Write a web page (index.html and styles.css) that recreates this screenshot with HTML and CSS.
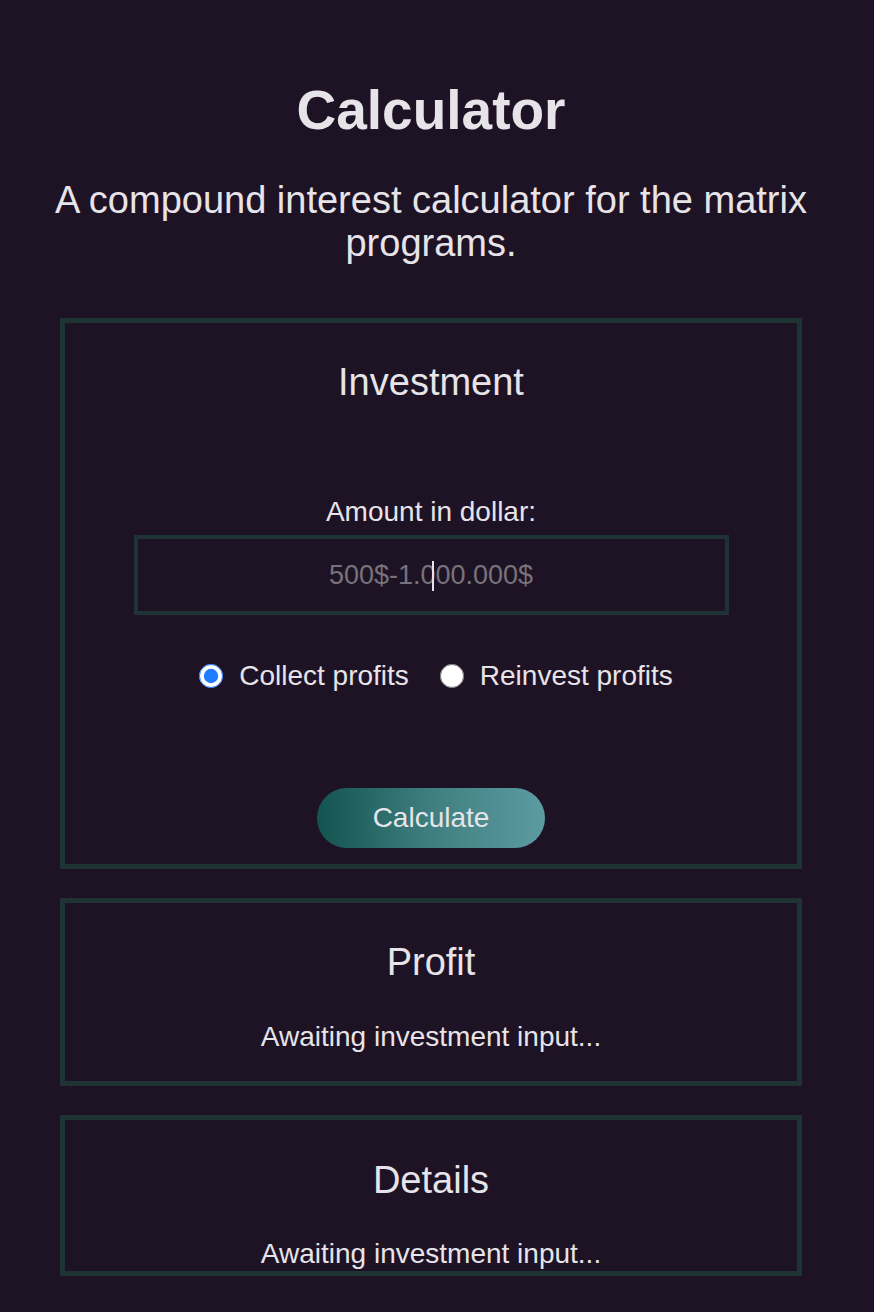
FILE: index.html
```html
<!DOCTYPE html>
<html lang="en">
<head>
<meta charset="utf-8">
<title>Calculator</title>
<link rel="stylesheet" href="styles.css">
</head>
<body>
<main class="page">
  <h1 class="title">Calculator</h1>
  <p class="subtitle">A compound interest calculator for the matrix programs.</p>

  <section class="card card-investment">
    <h2 class="card-title">Investment</h2>
    <label class="field-label" for="amount">Amount in dollar:</label>
    <div class="input-wrap">
      <input class="amount-input" id="amount" type="text" placeholder="500$-1.000.000$">
    </div>
    <div class="radio-row">
      <label class="radio-option"><input type="radio" name="mode" checked> <span>Collect profits</span></label>
      <label class="radio-option"><input type="radio" name="mode"> <span>Reinvest profits</span></label>
    </div>
    <button class="calc-btn" type="button">Calculate</button>
  </section>

  <section class="card card-profit">
    <h2 class="card-title">Profit</h2>
    <p class="card-text">Awaiting investment input...</p>
  </section>

  <section class="card card-details">
    <h2 class="card-title">Details</h2>
    <p class="card-text">Awaiting investment input...</p>
  </section>
</main>
</body>
</html>
```

FILE: styles.css
```css
html {
  overflow: hidden;
  background: #1e1225;
}

body {
  margin: 0;
  width: 862px;
  background: #1e1225;
  color: #e6e4e8;
  font-family: "Liberation Sans", Arial, sans-serif;
}

.page {
  display: flex;
  flex-direction: column;
  align-items: center;
  padding-top: 79px;
}

.title {
  margin: 0;
  font-size: 55px;
  line-height: 62px;
  font-weight: 700;
  text-align: center;
}

.subtitle {
  margin: 38px 0 0;
  font-size: 38px;
  line-height: 43px;
  text-align: center;
  padding: 0 40px;
}

.card {
  box-sizing: content-box;
  width: 85%;
  border: 5px solid #1e3434;
  display: flex;
  flex-direction: column;
  align-items: center;
  padding-top: 37px;
}

.card-investment {
  margin-top: 53px;
  padding-bottom: 16px;
}

.card-profit {
  margin-top: 29px;
  padding-bottom: 28px;
}

.card-details {
  margin-top: 29px;
  padding-top: 38px;
  padding-bottom: 1px;
}

.card-title {
  margin: 0;
  font-size: 38px;
  line-height: 44px;
  font-weight: 400;
}

.card-text {
  margin: 37px 0 0;
  font-size: 28px;
  line-height: 32px;
}

.card-details .card-text {
  margin-top: 36px;
}

.field-label {
  margin-top: 92px;
  font-size: 28px;
  line-height: 32px;
}

.input-wrap {
  margin-top: 7px;
  position: relative;
}

.amount-input {
  box-sizing: border-box;
  width: 595px;
  height: 80px;
  border: 4px solid #1e3434;
  background: transparent;
  color: #e6e4e8;
  font-family: "Liberation Sans", Arial, sans-serif;
  font-size: 27px;
  text-align: center;
  outline: none;
}

.amount-input::placeholder {
  color: #77727a;
}

.input-wrap::after {
  content: "";
  position: absolute;
  left: 298px;
  top: 26px;
  width: 2px;
  height: 30px;
  background: #e6e4e8;
}

.radio-row {
  margin-top: 45px;
  padding-left: 10px;
  display: flex;
  gap: 31px;
  font-size: 28px;
  line-height: 32px;
}

.radio-option {
  display: flex;
  align-items: center;
  gap: 16px;
}

.radio-option input {
  margin: 0;
  width: 24px;
  height: 24px;
  accent-color: #1f7bff;
}

.calc-btn {
  margin-top: 96px;
  width: 228px;
  height: 60px;
  border: none;
  border-radius: 30px;
  background: linear-gradient(90deg, #135451 0%, #3f7f80 50%, #5c9ba1 100%);
  color: #e6e4e8;
  font-family: "Liberation Sans", Arial, sans-serif;
  font-size: 28px;
}
```
